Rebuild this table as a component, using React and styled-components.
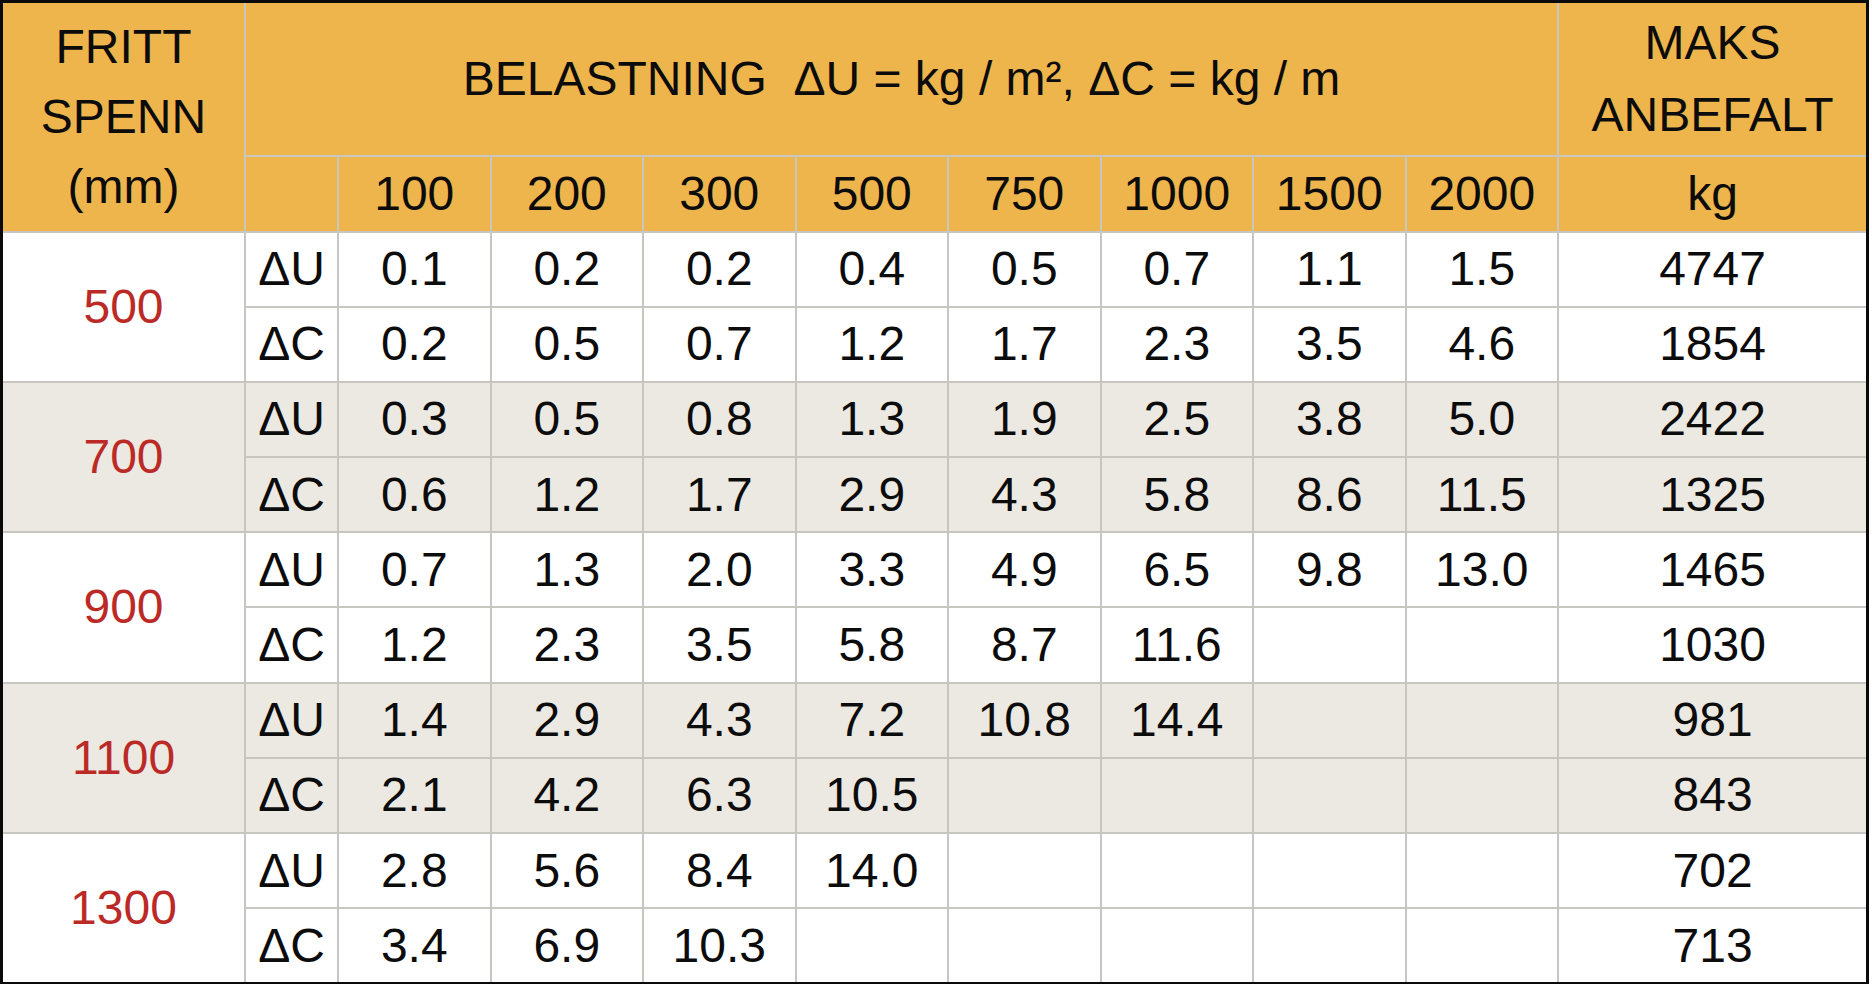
import React from "react";
import styled, { createGlobalStyle } from "styled-components";

const GlobalStyle = createGlobalStyle`
  html, body {
    margin: 0;
    padding: 0;
    background: #ffffff;
  }
  body {
    font-family: "Liberation Sans", Arial, sans-serif;
    color: #0c0c0c;
  }
`;

const Table = styled.table`
  border-collapse: collapse;
  table-layout: fixed;
  width: 1869px;
  border: 3px solid #0a0a0a;
  font-size: 48px;
`;

const HeadRow = styled.tr`
  background: #eeb54c;
  height: ${(p) => p.$h}px;
`;

const BodyRow = styled.tr`
  background: ${(p) => (p.$shaded ? "#ece9e2" : "#ffffff")};
  height: 75.2px;
`;

const Cell = styled.td`
  border: 2px solid #c8c6c0;
  padding: 0;
  text-align: center;
  vertical-align: middle;
  line-height: 1;
  white-space: pre;
`;

const HeadCell = styled(Cell)`
  line-height: ${(p) => p.$lh || 1}px;
`;

const TopCell = styled(Cell)`
  vertical-align: top;
`;

const Stack = styled.div`
  height: 140px;
  margin-top: 4px;
  line-height: 72px;
`;

const SpanCell = styled(Cell)`
  color: #bb2a26;
`;

const loads = [100, 200, 300, 500, 750, 1000, 1500, 2000];

const rows = [
  {
    span: 500,
    u: ["0.1", "0.2", "0.2", "0.4", "0.5", "0.7", "1.1", "1.5"],
    uMax: 4747,
    c: ["0.2", "0.5", "0.7", "1.2", "1.7", "2.3", "3.5", "4.6"],
    cMax: 1854,
  },
  {
    span: 700,
    u: ["0.3", "0.5", "0.8", "1.3", "1.9", "2.5", "3.8", "5.0"],
    uMax: 2422,
    c: ["0.6", "1.2", "1.7", "2.9", "4.3", "5.8", "8.6", "11.5"],
    cMax: 1325,
  },
  {
    span: 900,
    u: ["0.7", "1.3", "2.0", "3.3", "4.9", "6.5", "9.8", "13.0"],
    uMax: 1465,
    c: ["1.2", "2.3", "3.5", "5.8", "8.7", "11.6", "", ""],
    cMax: 1030,
  },
  {
    span: 1100,
    u: ["1.4", "2.9", "4.3", "7.2", "10.8", "14.4", "", ""],
    uMax: 981,
    c: ["2.1", "4.2", "6.3", "10.5", "", "", "", ""],
    cMax: 843,
  },
  {
    span: 1300,
    u: ["2.8", "5.6", "8.4", "14.0", "", "", "", ""],
    uMax: 702,
    c: ["3.4", "6.9", "10.3", "", "", "", "", ""],
    cMax: 713,
  },
];

const App = () => {
  return (
    <>
      <GlobalStyle />
      <Table>
        <colgroup>
          <col style={{ width: 243.5 }} />
          <col style={{ width: 93 }} />
          {loads.map((l) => (
            <col key={l} style={{ width: 152.5 }} />
          ))}
          <col style={{ width: 309.5 }} />
        </colgroup>
        <thead>
          <HeadRow $h={154}>
            <HeadCell rowSpan={2} $lh={70}>
              FRITT{"\n"}SPENN{"\n"}(mm)
            </HeadCell>
            <HeadCell colSpan={9}>
              {"BELASTNING  ΔU = kg / m², ΔC = kg / m"}
            </HeadCell>
            <TopCell>
              <Stack>MAKS{"\n"}ANBEFALT</Stack>
            </TopCell>
          </HeadRow>
          <HeadRow $h={76}>
            <Cell />
            {loads.map((l) => (
              <Cell key={l}>{l}</Cell>
            ))}
            <Cell>kg</Cell>
          </HeadRow>
        </thead>
        <tbody>
          {rows.map((r, i) => (
            <React.Fragment key={r.span}>
              <BodyRow $shaded={i % 2 === 1}>
                <SpanCell rowSpan={2}>{r.span}</SpanCell>
                <Cell>ΔU</Cell>
                {r.u.map((v, j) => (
                  <Cell key={j}>{v}</Cell>
                ))}
                <Cell>{r.uMax}</Cell>
              </BodyRow>
              <BodyRow $shaded={i % 2 === 1}>
                <Cell>ΔC</Cell>
                {r.c.map((v, j) => (
                  <Cell key={j}>{v}</Cell>
                ))}
                <Cell>{r.cMax}</Cell>
              </BodyRow>
            </React.Fragment>
          ))}
        </tbody>
      </Table>
    </>
  );
};

export default App;
